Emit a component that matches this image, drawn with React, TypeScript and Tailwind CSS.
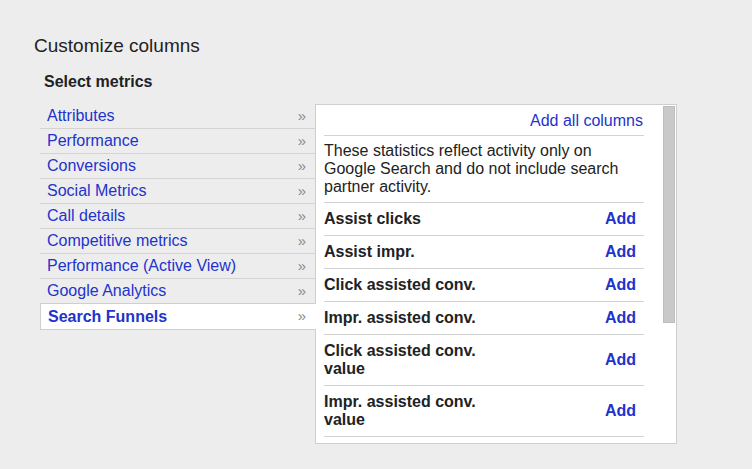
const categories = [
  'Attributes',
  'Performance',
  'Conversions',
  'Social Metrics',
  'Call details',
  'Competitive metrics',
  'Performance (Active View)',
  'Google Analytics',
]

const metrics = [
  { name: 'Assist clicks', tall: false },
  { name: 'Assist impr.', tall: false },
  { name: 'Click assisted conv.', tall: false },
  { name: 'Impr. assisted conv.', tall: false },
  { name: 'Click assisted conv. value', tall: true },
  { name: 'Impr. assisted conv. value', tall: true },
]

function App() {
  return (
    <div className="h-[469px] w-[752px] overflow-hidden bg-[#ededed] font-['Liberation_Sans',Arial,sans-serif] text-[#222]">
      <h1 className="pt-[35px] pl-[34px] text-[19px] leading-[22px]">Customize columns</h1>
      <h2 className="mt-[15px] pl-[44px] text-[16px] leading-[19px] font-bold">Select metrics</h2>
      <div className="mt-[13px] flex pl-[40px]">
        <ul className="relative z-10 w-[275px]">
          {categories.map((c) => (
            <li
              key={c}
              className="flex h-[25px] items-center justify-between border-b border-[#d3d3d3] pr-[9px] pl-[7px]"
            >
              <span className="text-[16px] text-[#2233cc]">{c}</span>
              <span className="text-[15px] text-[#8a8a8a]">»</span>
            </li>
          ))}
          <li className="-mt-px -mr-px flex h-[27px] items-center justify-between border-y border-l border-[#cfcfcf] bg-white pr-[10px] pl-[7px]">
            <span className="text-[16px] font-bold text-[#2233cc]">Search Funnels</span>
            <span className="text-[15px] text-[#8a8a8a]">»</span>
          </li>
        </ul>
        <div className="flex h-[340px] w-[362px] border border-[#cfcfcf] bg-white">
          <div className="w-[328px] pt-px pl-[8px]">
            <div className="flex h-[30px] items-center justify-end border-b border-[#d3d3d3] pr-[1px]">
              <span className="text-[16px] text-[#2233cc]">Add all columns</span>
            </div>
            <p className="h-[67px] border-b border-[#d3d3d3] pt-[6px] pr-[2px] text-[16px] leading-[18px]">
              These statistics reflect activity only on Google Search and do not include search
              partner activity.
            </p>
            {metrics.map((m) => (
              <div
                key={m.name}
                className={
                  m.tall
                    ? 'flex h-[51px] items-center justify-between border-b border-[#d3d3d3] pr-[8px]'
                    : 'flex h-[33px] items-center justify-between border-b border-[#d3d3d3] pr-[8px]'
                }
              >
                <span className="w-[185px] text-[16px] leading-[18px] font-bold">{m.name}</span>
                <span className="text-[16px] font-bold text-[#2233cc]">Add</span>
              </div>
            ))}
          </div>
          <div className="ml-auto flex w-[13px] flex-col pt-px pr-px">
            <div className="h-[217px] border border-[#bdbdbd] bg-[#c9c9c9]" />
          </div>
        </div>
      </div>
    </div>
  )
}

export default App
